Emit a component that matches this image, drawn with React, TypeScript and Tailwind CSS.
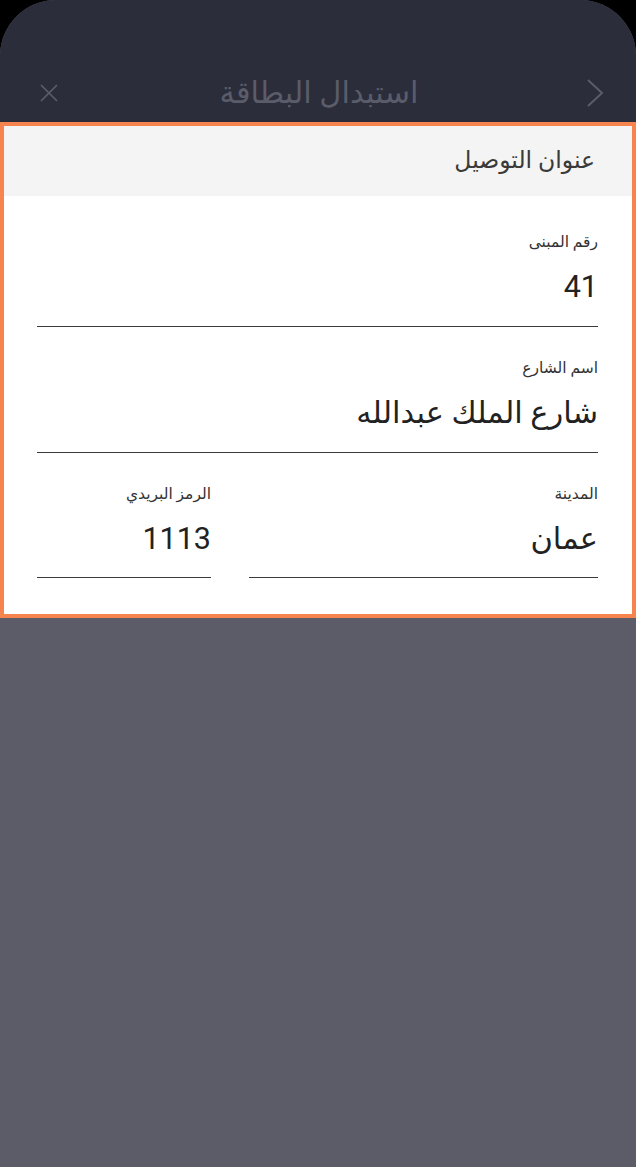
import { X } from 'lucide-react';

const font = { fontFamily: 'Roboto, "DejaVu Sans", sans-serif' };

function Field({ label, value, first, last }: { label: string; value: string; first?: boolean; last?: boolean }) {
  return (
    <div className={`${first ? 'pt-[36px]' : 'pt-[31px]'} ${last ? 'pb-[18px]' : 'pb-[19px]'} border-b-[1.5px] border-[#3a3a3a]`}>
      <div className="h-[20px] leading-[20px] text-[15.5px] text-[#333]">{label}</div>
      <div className="mt-[15px] h-[40px] leading-[40px] text-[30.5px] text-[#222]">{value}</div>
    </div>
  );
}

export default function App() {
  return (
    <div dir="rtl" className="min-h-screen bg-black" style={font}>
      <div className="h-[1167px] rounded-t-[56px] overflow-hidden bg-[#5c5c68] flex flex-col">
        {/* header */}
        <div className="h-[122px] bg-[#2b2d3b] pt-[64px] pr-[32px] pl-[34px]">
          <div className="h-[58px] flex items-center">
            <div className="w-[40px] flex justify-start">
              <svg width="18" height="30" viewBox="0 0 18 30" fill="none" stroke="#5a5c69" strokeWidth="2">
                <polyline points="2,2 16,15 2,28" />
              </svg>
            </div>
            <div className="flex-1 text-center text-[30.5px] text-[#5a5c69]">استبدال البطاقة</div>
            <div className="w-[40px] flex justify-end">
              <X className="text-[#5a5c69]" size={30} strokeWidth={1.4} />
            </div>
          </div>
        </div>

        {/* delivery address sheet */}
        <div className="border-4 border-[#f7834f] bg-white">
          <div className="h-[70px] bg-[#f4f4f4] flex items-center pr-[37px] text-[23.5px] text-[#3a3a3a]">
            عنوان التوصيل
          </div>
          <div className="pr-[34px] pl-[33px] pb-[36px]">
            <Field first label="رقم المبنى" value="41" />
            <Field label="اسم الشارع" value="شارع الملك عبدالله" />
            <div className="flex gap-[38px]">
              <div className="flex-1">
                <Field last label="المدينة" value="عمان" />
              </div>
              <div className="w-[174px]">
                <Field last label="الرمز البريدي" value="1113" />
              </div>
            </div>
          </div>
        </div>

        <div className="flex-1" />
      </div>
    </div>
  );
}
